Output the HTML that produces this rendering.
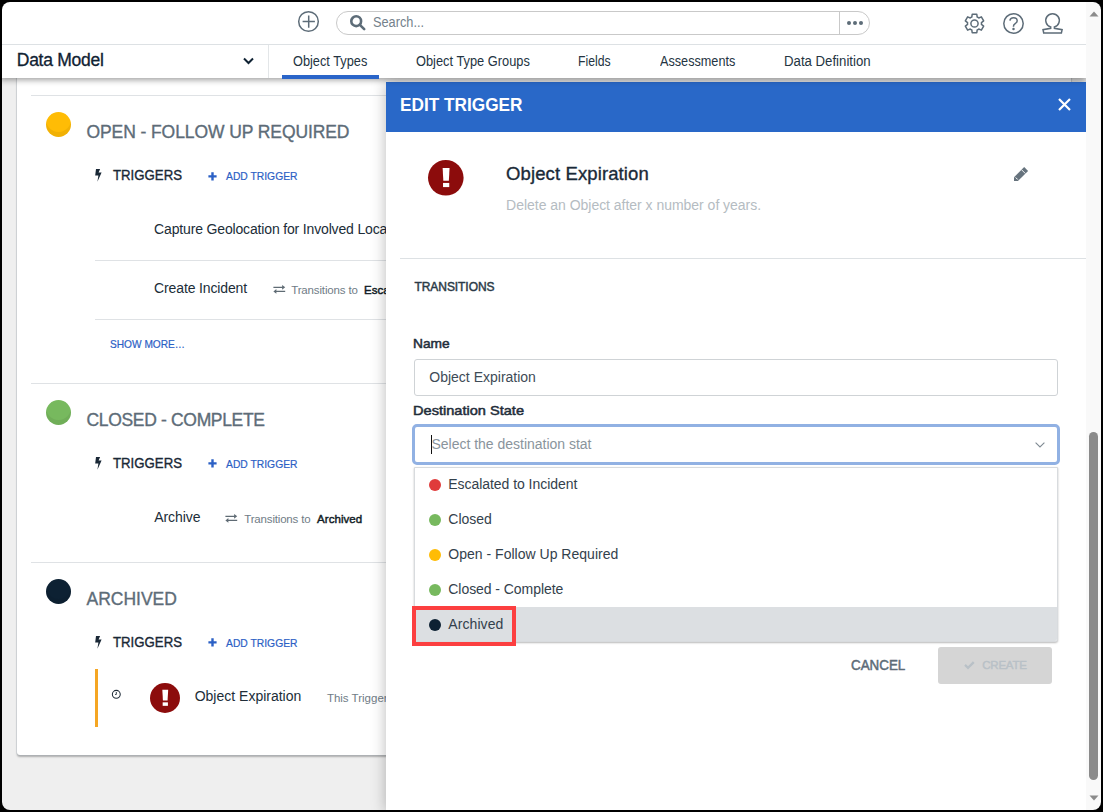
<!DOCTYPE html>
<html><head><meta charset="utf-8">
<style>
*{margin:0;padding:0;box-sizing:border-box}
html,body{width:1103px;height:812px;overflow:hidden;background:#efefef}
body{font-family:"Liberation Sans",sans-serif;position:relative}
.a{position:absolute}
.t{position:absolute;white-space:nowrap;line-height:1}
#frame{position:absolute;left:0;top:0;width:1103px;height:812px;overflow:hidden;z-index:100;pointer-events:none}
#frame div{position:absolute;left:2px;top:2px;width:1099px;height:808px;border-radius:8px;box-shadow:0 0 0 30px #000}
svg{position:absolute;overflow:visible}
</style></head><body>
<div class="a" style="left:17px;top:60px;width:1054px;height:694.5px;background:#fff;border-radius:3px;box-shadow:0 0 0 1px rgba(170,180,190,.3),0 1.5px 2px rgba(0,0,0,.28)"></div>
<div class="a" style="left:31px;top:95px;width:1025px;height:1px;background:#dfe2e5"></div>
<div class="a" style="left:95px;top:260px;width:961px;height:1px;background:#dfe2e5"></div>
<div class="a" style="left:95px;top:319px;width:961px;height:1px;background:#dfe2e5"></div>
<div class="a" style="left:31px;top:383px;width:1025px;height:1px;background:#dfe2e5"></div>
<div class="a" style="left:31px;top:562px;width:1025px;height:1px;background:#dfe2e5"></div>
<div class="a" style="left:46px;top:112.0px;width:25px;height:25px;border-radius:50%;background:#ffbc05;box-shadow:inset 0 -5px 0 rgba(0,0,0,.055)"></div>
<div class="a" style="left:46px;top:400.0px;width:25px;height:25px;border-radius:50%;background:#77b95e;box-shadow:inset 0 -5px 0 rgba(0,0,0,.055)"></div>
<div class="a" style="left:46px;top:578.8px;width:25px;height:25px;border-radius:50%;background:#0d2133;box-shadow:inset 0 -5px 0 rgba(0,0,0,.055)"></div>
<div class="t" style="left:86.50px;top:123.99px;font-size:17.5px;color:#5d6c78;letter-spacing:-0.089px;-webkit-text-stroke:0.35px #5d6c78;">OPEN - FOLLOW UP REQUIRED</div>
<div class="t" style="left:86.50px;top:411.99px;font-size:17.5px;color:#5d6c78;letter-spacing:-0.331px;-webkit-text-stroke:0.35px #5d6c78;">CLOSED - COMPLETE</div>
<div class="t" style="left:86.50px;top:591.49px;font-size:17.5px;color:#5d6c78;-webkit-text-stroke:0.35px #5d6c78;">ARCHIVED</div>
<svg style="left:93px;top:168.0px" width="10" height="15" viewBox="0 0 10 15"><path d="M3 0.9H7.1L5.6 4.6H8.6L4.4 13.7L5.4 7.6H2.2Z" fill="#1a2836"/></svg>
<div class="t" style="left:113.20px;top:167.95px;font-size:14px;color:#1a2836;transform:scaleX(0.9437);transform-origin:0 0;-webkit-text-stroke:0.35px #1a2836;">TRIGGERS</div>
<svg style="left:208px;top:171.5px" width="9" height="9" viewBox="0 0 9 9"><path d="M4.5 0.3V8.5M0.4 4.4H8.6" stroke="#2b60c5" stroke-width="2.4"/></svg>
<div class="t" style="left:225.50px;top:171.27px;font-size:11.5px;color:#2b60c5;transform:scaleX(0.8976);transform-origin:0 0;-webkit-text-stroke:0.2px #2b60c5;">ADD TRIGGER</div>
<svg style="left:93px;top:455.8px" width="10" height="15" viewBox="0 0 10 15"><path d="M3 0.9H7.1L5.6 4.6H8.6L4.4 13.7L5.4 7.6H2.2Z" fill="#1a2836"/></svg>
<div class="t" style="left:113.20px;top:455.75px;font-size:14px;color:#1a2836;transform:scaleX(0.9437);transform-origin:0 0;-webkit-text-stroke:0.35px #1a2836;">TRIGGERS</div>
<svg style="left:208px;top:459.3px" width="9" height="9" viewBox="0 0 9 9"><path d="M4.5 0.3V8.5M0.4 4.4H8.6" stroke="#2b60c5" stroke-width="2.4"/></svg>
<div class="t" style="left:225.50px;top:459.07px;font-size:11.5px;color:#2b60c5;transform:scaleX(0.8976);transform-origin:0 0;-webkit-text-stroke:0.2px #2b60c5;">ADD TRIGGER</div>
<svg style="left:93px;top:634.8px" width="10" height="15" viewBox="0 0 10 15"><path d="M3 0.9H7.1L5.6 4.6H8.6L4.4 13.7L5.4 7.6H2.2Z" fill="#1a2836"/></svg>
<div class="t" style="left:113.20px;top:634.75px;font-size:14px;color:#1a2836;transform:scaleX(0.9437);transform-origin:0 0;-webkit-text-stroke:0.35px #1a2836;">TRIGGERS</div>
<svg style="left:208px;top:638.3px" width="9" height="9" viewBox="0 0 9 9"><path d="M4.5 0.3V8.5M0.4 4.4H8.6" stroke="#2b60c5" stroke-width="2.4"/></svg>
<div class="t" style="left:225.50px;top:638.07px;font-size:11.5px;color:#2b60c5;transform:scaleX(0.8976);transform-origin:0 0;-webkit-text-stroke:0.2px #2b60c5;">ADD TRIGGER</div>
<div class="t" style="left:154.10px;top:221.75px;font-size:14px;color:#202d38;letter-spacing:-0.158px;">Capture Geolocation for Involved Location</div>
<div class="t" style="left:154.10px;top:281.15px;font-size:14px;color:#202d38;letter-spacing:-0.139px;">Create Incident</div>
<svg style="left:273.0px;top:284.0px" width="13" height="11" viewBox="0 0 13 11"><path d="M0.4 3.3H9.8M3 7.4H12.2" stroke="#5f6b74" stroke-width="1.3"/><path d="M12.2 3.3L9.1 0.9V5.7Z" fill="#5f6b74"/><path d="M0.4 7.4L3.4 5.0V9.8Z" fill="#5f6b74"/></svg>
<div class="t" style="left:291.20px;top:285.07px;font-size:11.5px;color:#707c86;letter-spacing:-0.146px;">Transitions to</div>
<div class="t" style="left:364.10px;top:285.07px;font-size:11.5px;color:#111c26;-webkit-text-stroke:0.45px #111c26;">Escalated to Incident</div>
<div class="t" style="left:110.40px;top:339.27px;font-size:11.5px;color:#2b60c5;transform:scaleX(0.8827);transform-origin:0 0;-webkit-text-stroke:0.2px #2b60c5;">SHOW MORE…</div>
<div class="t" style="left:154.20px;top:509.75px;font-size:14px;color:#202d38;letter-spacing:-0.064px;">Archive</div>
<svg style="left:225.1px;top:513.0px" width="13" height="11" viewBox="0 0 13 11"><path d="M0.4 3.3H9.8M3 7.4H12.2" stroke="#5f6b74" stroke-width="1.3"/><path d="M12.2 3.3L9.1 0.9V5.7Z" fill="#5f6b74"/><path d="M0.4 7.4L3.4 5.0V9.8Z" fill="#5f6b74"/></svg>
<div class="t" style="left:244.30px;top:514.07px;font-size:11.5px;color:#707c86;letter-spacing:-0.177px;">Transitions to</div>
<div class="t" style="left:317.10px;top:514.07px;font-size:11.5px;color:#111c26;letter-spacing:0.037px;-webkit-text-stroke:0.45px #111c26;">Archived</div>
<div class="a" style="left:94.5px;top:669px;width:3px;height:58px;background:#f5a623"></div>
<svg style="left:111px;top:689px" width="11" height="11" viewBox="0 0 11 11"><circle cx="5.3" cy="5.3" r="3.95" fill="none" stroke="#1f2c38" stroke-width="1.05"/><path d="M5.3 3V5.5H4.1" fill="none" stroke="#1f2c38" stroke-width="0.9"/></svg>
<svg style="left:150.0px;top:682.7px" width="30" height="30" viewBox="0 0 36 36"><circle cx="18" cy="18" r="18" fill="#8c0c0c"/><path d="M14.8 8.1H21.8L21.1 21H15.5Z" fill="#fff"/><rect x="15.2" y="23.2" width="6.3" height="4.2" fill="#fff"/></svg>
<div class="t" style="left:194.70px;top:688.55px;font-size:14px;color:#202d38;">Object Expiration</div>
<div class="t" style="left:326.90px;top:693.07px;font-size:11.5px;color:#707c86;">This Trigger will run on a schedule</div>
<div class="a" style="left:0;top:0;width:1086px;height:78px;background:#fff;z-index:10;box-shadow:0 2px 6px rgba(0,0,0,.38)">
<div class="a" style="left:0;top:44px;width:1086px;height:1px;background:#dde1e4"></div>
<svg style="left:298px;top:11px" width="21" height="21" viewBox="0 0 21 21"><circle cx="10.5" cy="10.5" r="9.8" fill="none" stroke="#5d6c78" stroke-width="1.5"/><path d="M10.7 4.4V16.7M4.6 10.6H16.9" stroke="#5d6c78" stroke-width="1.5"/></svg>
<div class="a" style="left:336px;top:11px;width:534px;height:24px;border:1px solid #c9c9c9;border-radius:12px;background:#fff"></div>
<div class="a" style="left:839px;top:11px;width:1px;height:24px;background:#c9c9c9"></div>
<div class="a" style="left:847px;top:21px;width:4px;height:4px;border-radius:50%;background:#5d6c78"></div>
<div class="a" style="left:853px;top:21px;width:4px;height:4px;border-radius:50%;background:#5d6c78"></div>
<div class="a" style="left:859px;top:21px;width:4px;height:4px;border-radius:50%;background:#5d6c78"></div>
<svg style="left:350px;top:15px" width="16" height="16" viewBox="0 0 16 16"><circle cx="6.2" cy="6.2" r="4.9" fill="none" stroke="#5d6c78" stroke-width="2.6"/><path d="M9.6 9.6L14.2 14.2" stroke="#5d6c78" stroke-width="2.6" stroke-linecap="round"/></svg>
<div class="t" style="left:372.60px;top:15.45px;font-size:14px;color:#74818b;transform:scaleX(0.9103);transform-origin:0 0;">Search...</div>
<svg style="left:964.3px;top:12.7px" width="21" height="21" viewBox="0 0 21 21"><path fill="none" stroke="#5d6c78" stroke-width="1.5" stroke-linejoin="round" d="M7.80 4.04L8.20 1.25L12.80 1.25L13.20 4.04A7.0 7.0 0 0 1 14.74 4.93L17.36 3.88L19.66 7.87L17.44 9.61A7.0 7.0 0 0 1 17.44 11.39L19.66 13.13L17.36 17.12L14.74 16.07A7.0 7.0 0 0 1 13.20 16.96L12.80 19.75L8.20 19.75L7.80 16.96A7.0 7.0 0 0 1 6.26 16.07L3.64 17.12L1.34 13.13L3.56 11.39A7.0 7.0 0 0 1 3.56 9.61L1.34 7.87L3.64 3.88L6.26 4.93A7.0 7.0 0 0 1 7.80 4.04Z"/><circle cx="10.5" cy="10.5" r="3.6" fill="none" stroke="#5d6c78" stroke-width="1.5"/></svg>
<svg style="left:1003px;top:13px" width="21" height="21" viewBox="0 0 21 21"><circle cx="10.5" cy="10.5" r="9.7" fill="none" stroke="#5d6c78" stroke-width="1.5"/><path d="M6.9 7.7C7.2 5.4 8.7 4.7 10.5 4.7C12.6 4.7 14.2 6 14.2 7.7C14.2 9.4 13 10.1 11.9 10.9C11 11.5 10.5 12.2 10.5 13.3V13.7" fill="none" stroke="#5d6c78" stroke-width="1.5"/><circle cx="10.5" cy="15.9" r="1.25" fill="#5d6c78"/></svg>
<svg style="left:1039px;top:11px" width="26" height="26" viewBox="0 0 26 26"><path d="M11.7 15.9A6.76 6.76 0 1 1 15.4 15.9V17.3L23.1 18.7L22.4 22.0H4.7L4.0 18.7L11.7 17.3Z" fill="none" stroke="#5d6c78" stroke-width="1.5" stroke-linejoin="miter"/></svg>
<div class="t" style="left:16.80px;top:51.69px;font-size:17.5px;color:#0f2233;letter-spacing:-0.277px;-webkit-text-stroke:0.3px #0f2233;">Data Model</div>
<svg style="left:243px;top:57px" width="11" height="8" viewBox="0 0 11 8"><path d="M1 1.5L5.5 6L10 1.5" fill="none" stroke="#0f2233" stroke-width="2"/></svg>
<div class="a" style="left:268px;top:45px;width:1px;height:33px;background:#e3e6e8"></div>
<div class="t" style="left:293.40px;top:53.95px;font-size:14px;color:#243442;transform:scaleX(0.9122);transform-origin:0 0;">Object Types</div>
<div class="a" style="left:282px;top:75px;width:97px;height:4px;background:#2a65c9;z-index:2"></div>
<div class="t" style="left:416.30px;top:53.95px;font-size:14px;color:#243442;transform:scaleX(0.9159);transform-origin:0 0;">Object Type Groups</div>
<div class="t" style="left:578.40px;top:53.95px;font-size:14px;color:#243442;transform:scaleX(0.8729);transform-origin:0 0;">Fields</div>
<div class="t" style="left:660.00px;top:53.95px;font-size:14px;color:#243442;transform:scaleX(0.9045);transform-origin:0 0;">Assessments</div>
<div class="t" style="left:784.00px;top:53.95px;font-size:14px;color:#243442;transform:scaleX(0.9431);transform-origin:0 0;">Data Definition</div>
</div>
<div class="a" style="left:386px;top:82px;width:700px;height:730px;background:#fff;box-shadow:0 0 14px rgba(0,0,0,.28);z-index:5"></div>
<div class="a" style="left:386px;top:82px;width:700px;height:50px;background:#2968c8;z-index:6"></div>
<div class="t" style="left:400.40px;top:95.56px;font-size:18px;color:#fff;font-weight:bold;transform:scaleX(0.9570);transform-origin:0 0;z-index:7;">EDIT TRIGGER</div>
<svg style="left:1057.5px;top:97.5px;z-index:7" width="13" height="13" viewBox="0 0 13 13"><path d="M1 1L12 12M12 1L1 12" stroke="#fff" stroke-width="2.2"/></svg>
<svg style="z-index:7;left:428.1px;top:160.0px" width="35.6" height="35.6" viewBox="0 0 36 36"><circle cx="18" cy="18" r="18" fill="#8c0c0c"/><path d="M14.8 8.1H21.8L21.1 21H15.5Z" fill="#fff"/><rect x="15.2" y="23.2" width="6.3" height="4.2" fill="#fff"/></svg>
<div class="t" style="left:506.10px;top:165.44px;font-size:18.5px;color:#1a2a38;letter-spacing:0.108px;-webkit-text-stroke:0.35px #1a2a38;z-index:7;">Object Expiration</div>
<div class="t" style="left:506.10px;top:197.95px;font-size:14px;color:#b5bcc2;letter-spacing:-0.025px;z-index:7;">Delete an Object after x number of years.</div>
<svg style="left:1012px;top:165px;z-index:7" width="18" height="18" viewBox="0 0 18 18"><path d="M2 12.2L12.2 2L16.1 5.9L5.9 16.1L2 16.1Z" fill="#66737d"/><path d="M9.5 4.7L13.3 8.5" stroke="#fff" stroke-width="0.9"/><path d="M3.7 12.5L5.7 14.5" stroke="#fff" stroke-width="1"/></svg>
<div class="a" style="left:400px;top:258px;width:686px;height:1px;background:#dde1e4;z-index:7"></div>
<div class="t" style="left:414.50px;top:281.04px;font-size:12px;color:#2b3a47;letter-spacing:-0.067px;-webkit-text-stroke:0.45px #2b3a47;z-index:7;">TRANSITIONS</div>
<div class="t" style="left:413.40px;top:336.80px;font-size:13px;color:#1f2d3a;transform:scaleX(1.0583);transform-origin:0 0;-webkit-text-stroke:0.5px #1f2d3a;z-index:7;">Name</div>
<div class="a" style="left:414px;top:359px;width:644px;height:37px;border:1px solid #cfd3d6;border-radius:3px;background:#fff;z-index:7"></div>
<div class="t" style="left:429.30px;top:369.65px;font-size:14px;color:#3e4b56;z-index:7;">Object Expiration</div>
<div class="t" style="left:413.40px;top:403.70px;font-size:13px;color:#1f2d3a;transform:scaleX(1.1211);transform-origin:0 0;-webkit-text-stroke:0.5px #1f2d3a;z-index:7;">Destination State</div>
<div class="a" style="left:412px;top:424px;width:648px;height:40.5px;border:3px solid #91b1e3;border-radius:5px;background:#fff;z-index:7"></div>
<div class="a" style="left:431px;top:435px;width:1px;height:19px;background:#111;z-index:7"></div>
<div class="t" style="left:431.50px;top:436.75px;font-size:14px;color:#8a949c;letter-spacing:-0.013px;z-index:7;">Select the destination stat</div>
<svg style="left:1035px;top:441.5px;z-index:7" width="10" height="6" viewBox="0 0 10 6"><path d="M0.6 0.6L5 5L9.4 0.6" fill="none" stroke="#7f8a93" stroke-width="1.1"/></svg>
<div class="a" style="left:414px;top:467px;width:644px;height:175px;background:#fff;border:1px solid #d8dbde;border-radius:0 0 3px 3px;box-shadow:0 1px 2px rgba(0,0,0,.28);z-index:8;overflow:hidden">
<div class="a" style="left:0;top:139px;width:644px;height:35px;background:#dcdfe2"></div>
</div>
<div class="a" style="left:429px;top:478.7px;width:12px;height:12px;border-radius:50%;background:#e03b3b;z-index:9"></div>
<div class="t" style="left:448.30px;top:477.05px;font-size:14px;color:#33414c;letter-spacing:-0.049px;z-index:9;">Escalated to Incident</div>
<div class="a" style="left:429px;top:513.7px;width:12px;height:12px;border-radius:50%;background:#77b95e;z-index:9"></div>
<div class="t" style="left:448.30px;top:512.05px;font-size:14px;color:#33414c;z-index:9;">Closed</div>
<div class="a" style="left:429px;top:548.7px;width:12px;height:12px;border-radius:50%;background:#ffbc05;z-index:9"></div>
<div class="t" style="left:448.30px;top:547.05px;font-size:14px;color:#33414c;letter-spacing:0.015px;z-index:9;">Open - Follow Up Required</div>
<div class="a" style="left:429px;top:583.7px;width:12px;height:12px;border-radius:50%;background:#77b95e;z-index:9"></div>
<div class="t" style="left:448.30px;top:582.05px;font-size:14px;color:#33414c;letter-spacing:-0.059px;z-index:9;">Closed - Complete</div>
<div class="a" style="left:429px;top:618.7px;width:12px;height:12px;border-radius:50%;background:#0d2133;z-index:9"></div>
<div class="t" style="left:448.30px;top:617.05px;font-size:14px;color:#33414c;letter-spacing:0.076px;z-index:9;">Archived</div>
<div class="a" style="left:412px;top:606px;width:104px;height:40px;border:4px solid #fc3f40;z-index:9"></div>
<div class="t" style="left:850.70px;top:657.85px;font-size:14px;color:#5d6c78;transform:scaleX(0.9561);transform-origin:0 0;-webkit-text-stroke:0.5px #5d6c78;z-index:7;">CANCEL</div>
<div class="a" style="left:938px;top:647px;width:114px;height:37px;background:#d5d5d5;border-radius:3px;z-index:7"></div>
<svg style="left:963.5px;top:660.5px;z-index:7" width="11" height="9" viewBox="0 0 11 9"><path d="M0.2 4.7L1.8 3.1L4.0 5.3L8.9 0.3L10.6 1.9L4.0 8.6Z" fill="#b9c1c7"/></svg>
<div class="t" style="left:982.30px;top:660.07px;font-size:11.5px;color:#b9c1c7;letter-spacing:-0.239px;-webkit-text-stroke:0.45px #b9c1c7;z-index:7;">CREATE</div>
<div class="a" style="left:1086px;top:0;width:17px;height:812px;background:#f9f9f9;z-index:20"></div>
<svg style="left:1089px;top:11px;z-index:21" width="10" height="6" viewBox="0 0 10 6"><path d="M5 0.5L9.5 5.5H0.5z" fill="#8b8b8b"/></svg>
<svg style="left:1089px;top:795px;z-index:21" width="10" height="6" viewBox="0 0 10 6"><path d="M0.5 0.5H9.5L5 5.5z" fill="#8b8b8b"/></svg>
<div class="a" style="left:1089px;top:432px;width:9px;height:348px;border-radius:4.5px;background:#8b8b8b;z-index:21"></div>
<div id="frame"><div></div></div>
</body></html>
